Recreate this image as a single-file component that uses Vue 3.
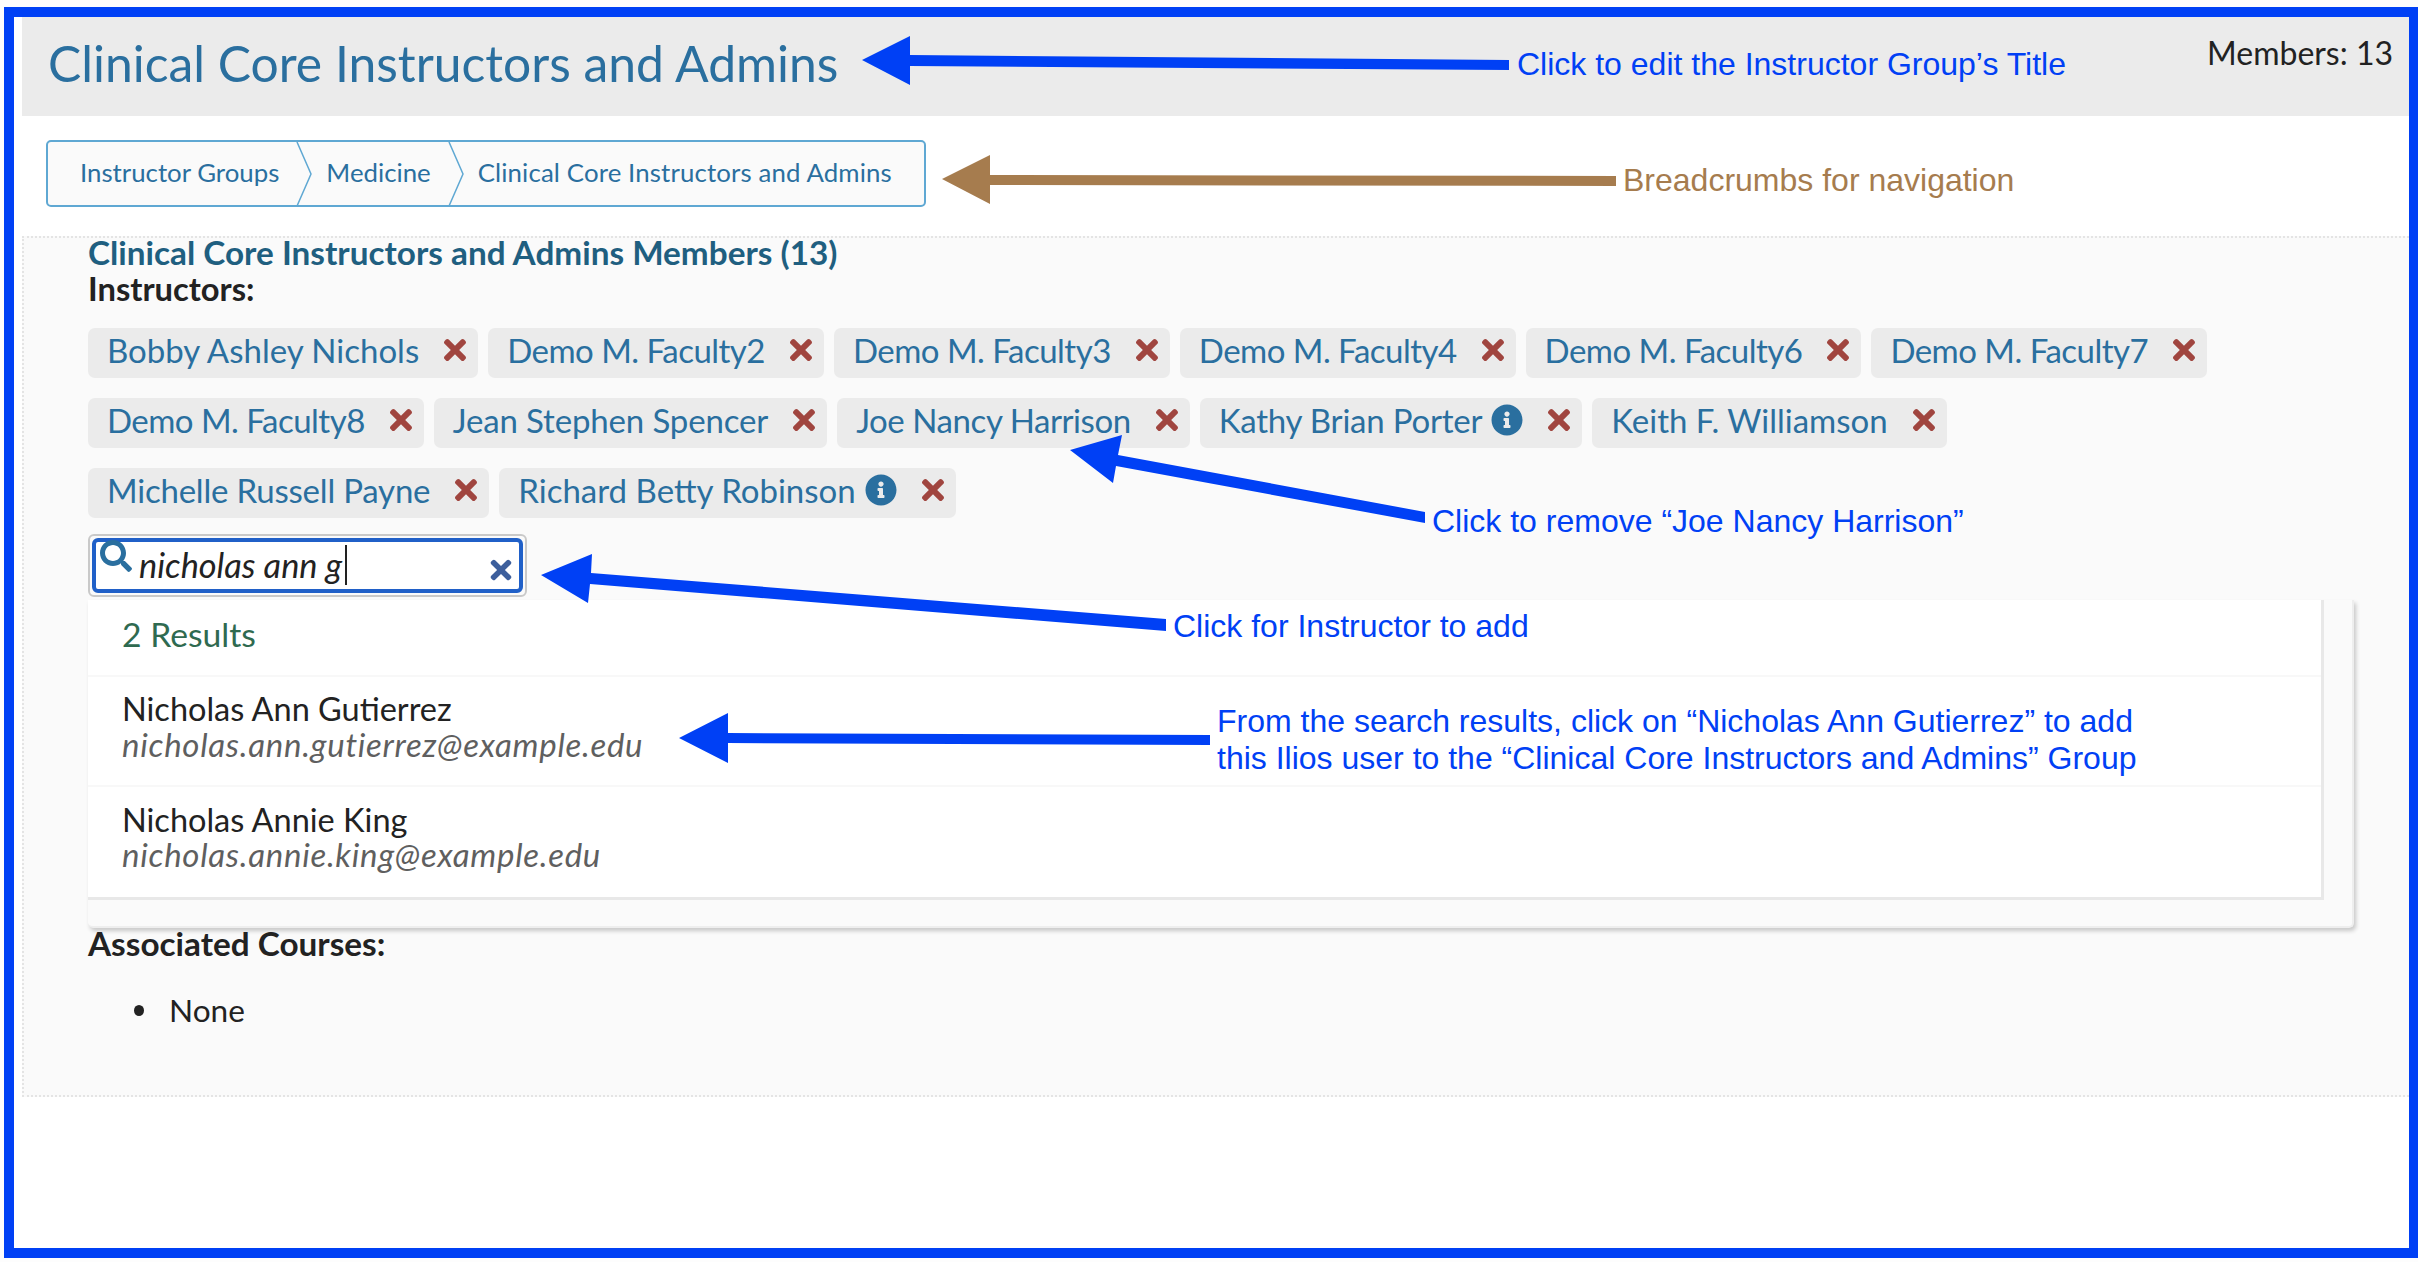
<template>
  <div class="page">
    <div class="frame">
      <header class="title-bar">
        <h1>Clinical Core Instructors and Admins</h1>
        <span class="members-count">Members: 13</span>
      </header>

      <div class="crumb-row">
        <nav class="crumbs">
          <template v-for="(crumb, i) in crumbs" :key="crumb">
            <a href="#" @click.prevent>{{ crumb }}</a>
            <svg v-if="i < crumbs.length - 1" class="chevron" viewBox="0 0 16 64" width="16" height="64">
              <path d="M1 0 L15 32 L1 64" fill="none" stroke="#5fa8d3" stroke-width="1.5" />
            </svg>
          </template>
        </nav>
      </div>

      <section class="members">
        <h2>Clinical Core Instructors and Admins Members (13)</h2>
        <div class="label">Instructors:</div>
        <ul class="chips">
          <li v-for="person in instructors" :key="person.name" class="chip">
            <span class="chip-name" :style="{ letterSpacing: (person.track || 0) + 'px' }">{{ person.name }}</span>
            <svg v-if="person.info" class="info" viewBox="0 0 512 512">
              <path fill="#2a6f9f" d="M256 8C119.043 8 8 119.083 8 256c0 136.997 111.043 248 248 248s248-111.003 248-248C504 119.083 392.957 8 256 8zm0 110c23.196 0 42 18.804 42 42s-18.804 42-42 42-42-18.804-42-42 18.804-42 42-42zm56 254c0 6.627-5.373 12-12 12h-88c-6.627 0-12-5.373-12-12v-24c0-6.627 5.373-12 12-12h12v-64h-12c-6.627 0-12-5.373-12-12v-24c0-6.627 5.373-12 12-12h64c6.627 0 12 5.373 12 12v100h12c6.627 0 12 5.373 12 12v24z" />
            </svg>
            <svg class="remove" viewBox="0 0 352 512">
              <path fill="#a0453f" :d="timesPath" />
            </svg>
          </li>
        </ul>

        <div class="search-outer">
          <div class="search-box">
            <svg class="search-icon" viewBox="0 0 512 512">
              <path fill="#2a6f9f" d="M505 442.7L405.3 343c-4.5-4.5-10.6-7-17-7H372c27.6-35.3 44-79.7 44-128C416 93.1 322.9 0 208 0S0 93.1 0 208s93.1 208 208 208c48.3 0 92.7-16.4 128-44v16.3c0 6.4 2.5 12.5 7 17l99.7 99.7c9.4 9.4 24.6 9.4 33.9 0l28.3-28.3c9.4-9.4 9.4-24.6.1-34zM208 336c-70.7 0-128-57.2-128-128 0-70.7 57.2-128 128-128 70.7 0 128 57.2 128 128 0 70.7-57.2 128-128 128z" />
            </svg>
            <span class="search-text">nicholas ann g</span>
            <svg class="search-clear" viewBox="0 0 352 512">
              <path fill="#3d5f9c" :d="timesPath" />
            </svg>
          </div>
        </div>

        <div class="results-panel">
          <ul class="results">
            <li class="results-count">2 Results</li>
            <li v-for="r in results" :key="r.email" class="result">
              <div class="result-name">{{ r.name }}</div>
              <div class="result-email">{{ r.email }}</div>
            </li>
          </ul>
        </div>

        <div class="label courses-label">Associated Courses:</div>
        <ul class="courses">
          <li>None</li>
        </ul>
      </section>
    </div>

    <!-- annotations drawn on top of the screenshot -->
    <svg class="arrows" viewBox="0 0 2418 1262" width="2418" height="1262">
      <path fill="#0040f5" d="M862 60 L910 36 L910 55 L1509 60 L1509 70 L910 66 L910 85 Z" />
      <path fill="#a67c4e" d="M942 179 L990 155 L990 175 L1616 176 L1616 186 L990 185 L990 204 Z" />
      <path fill="#0040f5" d="M1070 450 L1122 435 L1118 455 L1425 512 L1425 523 L1116 466 L1113 483 Z" />
      <path fill="#0040f5" d="M541 575 L592 554 L591 573 L1166 619 L1166 631 L590 584 L588 603 Z" />
      <path fill="#0040f5" d="M679 738 L728 713 L728 733 L1210 735 L1210 745 L728 743 L728 763 Z" />
    </svg>
    <div class="note blue" style="left: 1517px; top: 46px">Click to edit the Instructor Group’s Title</div>
    <div class="note brown" style="left: 1623px; top: 162px">Breadcrumbs for navigation</div>
    <div class="note blue" style="left: 1432px; top: 503px">Click to remove “Joe Nancy Harrison”</div>
    <div class="note blue" style="left: 1173px; top: 608px">Click for Instructor to add</div>
    <div class="note blue" style="left: 1217px; top: 703px">From the search results, click on “Nicholas Ann Gutierrez” to add<br />this Ilios user to the “Clinical Core Instructors and Admins” Group</div>
  </div>
</template>

<script setup>
const timesPath = 'M242.72 256l100.07-100.07c12.28-12.28 12.28-32.19 0-44.48l-22.24-22.24c-12.28-12.28-32.19-12.28-44.48 0L176 189.28 75.93 89.21c-12.28-12.28-32.19-12.28-44.48 0L9.21 111.45c-12.28 12.28-12.28 32.19 0 44.48L109.28 256 9.21 356.07c-12.28 12.28-12.28 32.19 0 44.48l22.24 22.24c12.28 12.28 32.2 12.28 44.48 0L176 322.72l100.07 100.07c12.28 12.28 32.2 12.28 44.48 0l22.24-22.24c12.28-12.28 12.28-32.19 0-44.48L242.72 256z'

const crumbs = ['Instructor Groups', 'Medicine', 'Clinical Core Instructors and Admins']

// track: small letter-spacing so each name keeps the width it has in the original font
const instructors = [
  { name: 'Bobby Ashley Nichols' },
  { name: 'Demo M. Faculty2', track: -0.52 },
  { name: 'Demo M. Faculty3', track: -0.52 },
  { name: 'Demo M. Faculty4', track: -0.52 },
  { name: 'Demo M. Faculty6', track: -0.52 },
  { name: 'Demo M. Faculty7', track: -0.52 },
  { name: 'Demo M. Faculty8', track: -0.52 },
  { name: 'Jean Stephen Spencer', track: -0.15 },
  { name: 'Joe Nancy Harrison', track: -0.43 },
  { name: 'Kathy Brian Porter', info: true, track: -0.22 },
  { name: 'Keith F. Williamson' },
  { name: 'Michelle Russell Payne', track: -0.21 },
  { name: 'Richard Betty Robinson', info: true },
]

const results = [
  { name: 'Nicholas Ann Gutierrez', email: 'nicholas.ann.gutierrez@example.edu' },
  { name: 'Nicholas Annie King', email: 'nicholas.annie.king@example.edu' },
]
</script>

<style>
body {
  background: #fdfdfd;
}
</style>

<style scoped>
.page {
  position: relative;
  width: 2418px;
  height: 1262px;
  overflow: hidden;
  font-family: Lato, "Noto Sans", sans-serif;
  color: #222;
}
.frame {
  box-sizing: border-box;
  width: 2414px;
  height: 1251px;
  margin: 7px 0 0 4px;
  padding-left: 8px;
  background: #fff;
  border: solid #0040f5;
  border-width: 10px 9px 10px 10px;
}
.title-bar {
  display: flex;
  justify-content: space-between;
  height: 99px;
  padding: 0 16px 0 26px;
  background: #ebebeb;
}
.title-bar h1 {
  margin: 0;
  padding-top: 17px;
  font-size: 49.8px;
  line-height: 58px;
  font-weight: 400;
  color: #2a6f9f;
}
.members-count {
  padding-top: 17px;
  font-size: 32px;
  line-height: 38px;
}
.crumb-row {
  height: 120px;
  padding: 24px 0 0 24px;
  box-sizing: border-box;
}
.crumbs {
  box-sizing: border-box;
  display: inline-flex;
  align-items: center;
  width: 880px;
  height: 67px;
  padding-left: 32px;
  background: #fafafa;
  border: 2px solid #5fa8d3;
  border-radius: 5px;
}
.crumbs a {
  margin-top: -3px;
  font-size: 25.8px;
  color: #2a6f9f;
  text-decoration: none;
}
.crumbs a:last-of-type {
  letter-spacing: 0.13px;
}
.chevron {
  margin: 0 14px 0 17px;
}
.members {
  box-sizing: border-box;
  height: 861px;
  padding-left: 64px;
  background: #fafafa;
  border-top: 2px dotted #e4e4e4;
  border-bottom: 2px dotted #e4e4e4;
  border-left: 2px dotted #e4e4e4;
}
.members h2 {
  margin: 0 0 6px;
  font-size: 33.3px;
  line-height: 28px;
  font-weight: 700;
  color: #1f5f80;
}
.label {
  font-size: 32.7px;
  line-height: 34px;
  font-weight: 700;
  color: #222;
}
.chips {
  display: flex;
  flex-wrap: wrap;
  gap: 20px 10px;
  width: 2200px;
  margin: 22px 0 0;
  padding: 0;
  list-style: none;
}
.chip {
  box-sizing: border-box;
  display: flex;
  align-items: center;
  height: 50px;
  padding: 0 11px 6px 19px;
  background: #ebebeb;
  border-radius: 7px;
  font-size: 33px;
  color: #2a6f9f;
}
.info {
  width: 32px;
  height: 32px;
  margin-left: 9px;
}
.remove {
  width: 24px;
  height: 32px;
  margin-left: 24px;
}
.search-outer {
  box-sizing: border-box;
  width: 439px;
  height: 63px;
  margin-top: 16px;
  padding: 2px;
  border: 2px solid #c9c9c9;
  border-radius: 6px;
}
.search-box {
  box-sizing: border-box;
  position: relative;
  display: flex;
  align-items: center;
  height: 55px;
  padding: 0 0 2px 43px;
  background: #fff;
  border: 4px solid #2060c8;
  border-radius: 6px;
}
.search-icon {
  position: absolute;
  left: 4px;
  top: -2px;
  width: 32px;
  height: 32px;
}
.search-text {
  padding-right: 3px;
  border-right: 2px solid #222;
  font-size: 34.3px;
  font-style: italic;
  line-height: 40px;
}
.search-clear {
  position: absolute;
  right: 7px;
  top: 13px;
  width: 22px;
  height: 30px;
}
.results-panel {
  box-sizing: border-box;
  width: 2266px;
  height: 328px;
  margin-top: 3px;
  background: #fafafa;
  border-right: 2px solid #eee;
  border-bottom: 2px solid #eee;
  border-radius: 0 0 5px 5px;
  box-shadow: 2px 3px 4px rgba(0, 0, 0, 0.2);
}
.results {
  box-sizing: border-box;
  width: 2236px;
  height: 300px;
  margin: 0;
  padding: 0;
  list-style: none;
  background: #fff;
  border-right: 3px solid #e8e8e8;
  border-bottom: 3px solid #e8e8e8;
}
.results-count {
  height: 75px;
  padding-left: 34px;
  font-size: 33.7px;
  line-height: 69px;
  color: #2f6a50;
  border-bottom: 2px solid #f8f8f8;
}
.result {
  box-sizing: border-box;
  height: 110px;
  padding: 13px 0 0 34px;
  border-bottom: 2px solid #f8f8f8;
}
.result:last-child {
  padding-top: 14px;
  border-bottom: 0;
}
.result:last-child .result-email {
  margin-top: -1px;
}
.result-name {
  font-size: 32.5px;
  line-height: 37px;
  color: #222;
}
.result-email {
  font-size: 33px;
  line-height: 34px;
  letter-spacing: 0.7px;
  font-style: italic;
  color: #5f5f5f;
}
.courses-label {
  margin-top: -2px;
  font-size: 33.3px;
}
.courses {
  margin: 31px 0 0;
  padding-left: 46px;
  font-size: 31.6px;
  line-height: 38px;
  list-style: none;
}
.courses li {
  display: flex;
  align-items: center;
}
.courses li::before {
  content: "";
  width: 10px;
  height: 11px;
  margin-right: 25px;
  background: #222;
  border-radius: 50%;
}
.arrows {
  position: absolute;
  left: 0;
  top: 0;
  pointer-events: none;
}
.note {
  position: absolute;
  font-family: "Liberation Sans", Arial, sans-serif;
  font-size: 32px;
  line-height: 37px;
  white-space: nowrap;
}
.blue {
  color: #0040f5;
}
.brown {
  color: #a67c4e;
}
</style>
